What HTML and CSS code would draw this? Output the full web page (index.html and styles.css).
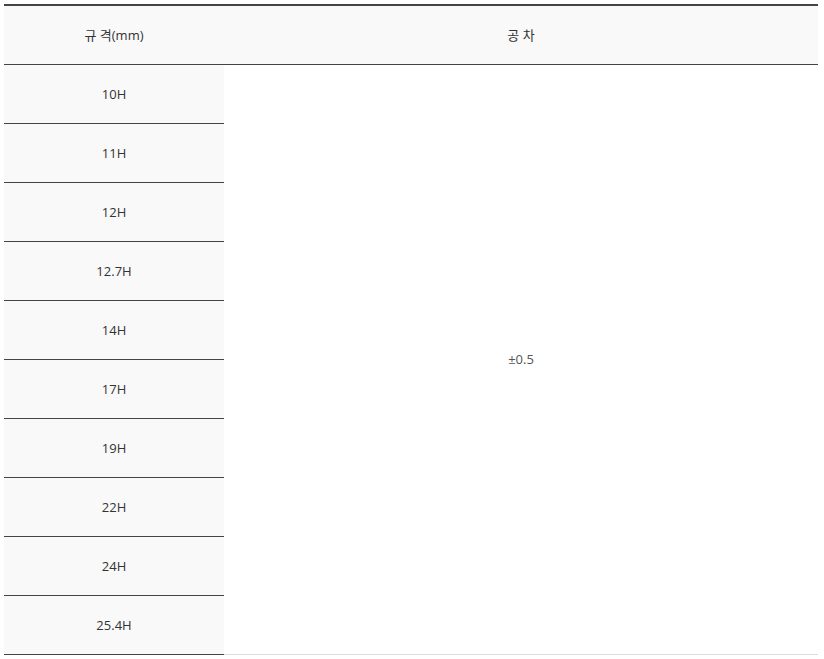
FILE: index.html
```html
<!DOCTYPE html>
<html lang="ko">
<head>
<meta charset="utf-8">
<link rel="stylesheet" href="styles.css">
</head>
<body>
<table class="spec">
  <thead>
    <tr><th class="col-size">규 격(mm)</th><th>공 차</th></tr>
  </thead>
  <tbody>
    <tr><td class="size">10H</td><td class="tol" rowspan="10">±0.5</td></tr>
    <tr><td class="size">11H</td></tr>
    <tr><td class="size">12H</td></tr>
    <tr><td class="size">12.7H</td></tr>
    <tr><td class="size">14H</td></tr>
    <tr><td class="size">17H</td></tr>
    <tr><td class="size">19H</td></tr>
    <tr><td class="size">22H</td></tr>
    <tr><td class="size">24H</td></tr>
    <tr><td class="size">25.4H</td></tr>
  </tbody>
</table>
</body>
</html>
```
FILE: styles.css
```css
html, body {
  margin: 0;
  background: #fff;
}
body {
  padding: 4px 6px 0 4px;
  font-family: "Open Sans", "Noto Sans CJK KR", sans-serif;
  font-size: 13px;
  color: #555;
}
.spec {
  width: 814px;
  border-collapse: collapse;
  border-top: 2px solid #444;
}
.spec th {
  height: 57px;
  padding: 0 0 1px;
  background: #f9f9f9;
  font-weight: 400;
  color: #333;
  border-bottom: 1px solid #444;
  text-align: center;
  vertical-align: middle;
}
.spec .col-size {
  width: 220px;
}
.spec td {
  padding: 0 0 1px;
  text-align: center;
  vertical-align: middle;
}
.spec .size {
  height: 57px;
  background: #f9f9f9;
  border-bottom: 1px solid #444;
  color: #333;
}
.spec .tol {
  background: #fff;
  border-bottom: 1px solid #ddd;
  color: #555;
}
```
